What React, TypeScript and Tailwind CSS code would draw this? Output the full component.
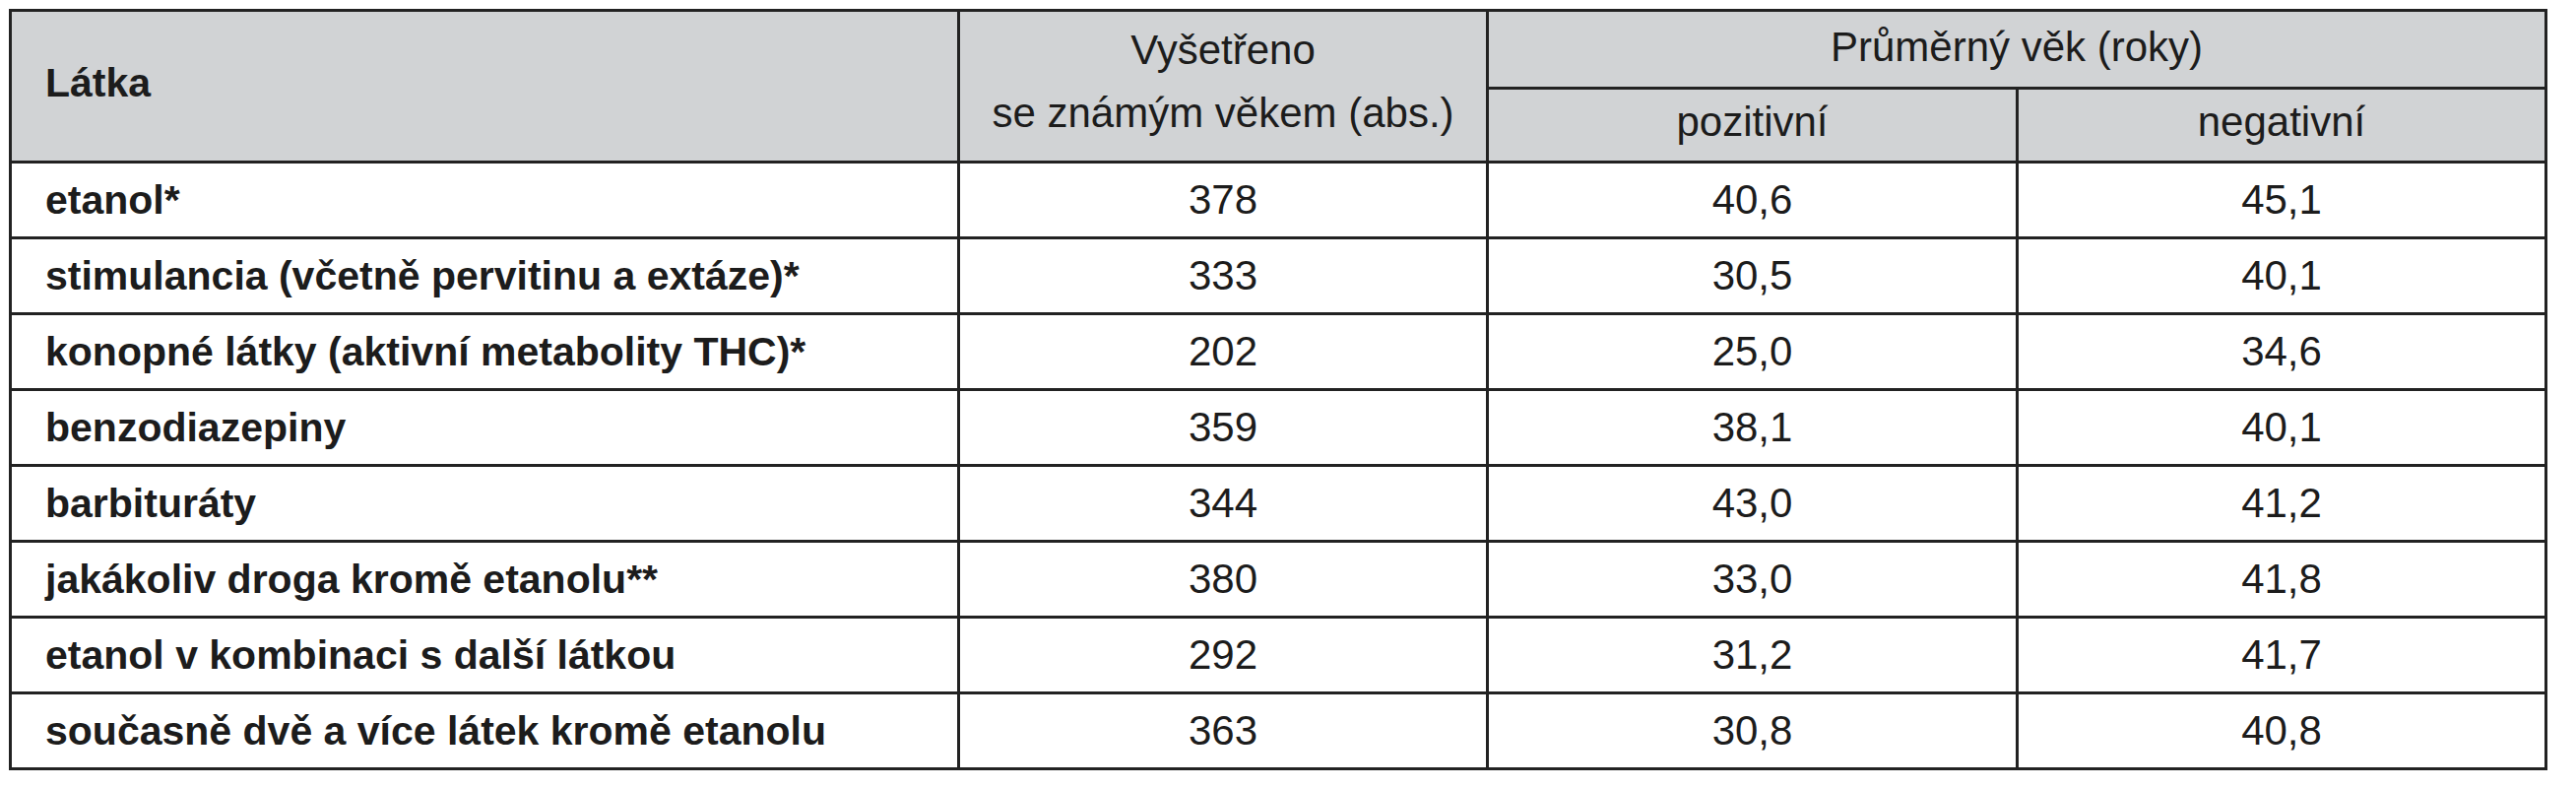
import React from 'react';

type Row = { name: string; total: string; pos: string; neg: string };

const rows: Row[] = [
  { name: 'etanol*', total: '378', pos: '40,6', neg: '45,1' },
  { name: 'stimulancia (včetně pervitinu a extáze)*', total: '333', pos: '30,5', neg: '40,1' },
  { name: 'konopné látky (aktivní metabolity THC)*', total: '202', pos: '25,0', neg: '34,6' },
  { name: 'benzodiazepiny', total: '359', pos: '38,1', neg: '40,1' },
  { name: 'barbituráty', total: '344', pos: '43,0', neg: '41,2' },
  { name: 'jakákoliv droga kromě etanolu**', total: '380', pos: '33,0', neg: '41,8' },
  { name: 'etanol v kombinaci s další látkou', total: '292', pos: '31,2', neg: '41,7' },
  { name: 'současně dvě a více látek kromě etanolu', total: '363', pos: '30,8', neg: '40,8' },
];

export default function App() {
  return (
    <div className="w-[2616px] h-[800px] bg-white pt-[9px] pl-[9px] text-[#1c1c1c] font-['Liberation_Sans',Arial,sans-serif]">
      <table className="table-fixed border-collapse w-[2575px] border-[3px] border-[#222]">
        <colgroup>
          <col className="w-[963px]" />
          <col className="w-[537px]" />
          <col className="w-[538px]" />
          <col className="w-[537px]" />
        </colgroup>
        <thead className="bg-[#d1d3d5]">
          <tr className="h-[79px]">
            <th
              rowSpan={2}
              className="border-[3px] border-[#222] text-left align-middle pl-[34px] pb-[6px] text-[41px] font-bold leading-none"
            >
              Látka
            </th>
            <th
              rowSpan={2}
              className="border-[3px] border-[#222] text-center align-middle pb-[10px] text-[42px] font-normal leading-[64px]"
            >
              Vyšetřeno
              <br />
              se známým věkem (abs.)
            </th>
            <th
              colSpan={2}
              className="border-[3px] border-[#222] text-center align-middle pb-[4px] text-[42px] font-normal leading-none"
            >
              Průměrný věk (roky)
            </th>
          </tr>
          <tr className="h-[75px]">
            <th className="border-[3px] border-[#222] text-center align-middle pb-[6px] text-[42px] font-normal leading-none">
              pozitivní
            </th>
            <th className="border-[3px] border-[#222] text-center align-middle pb-[6px] text-[42px] font-normal leading-none">
              negativní
            </th>
          </tr>
        </thead>
        <tbody>
          {rows.map((r) => (
            <tr key={r.name} className="h-[77px]">
              <td className="border-[3px] border-[#222] pl-[34px] text-[41px] font-bold leading-none whitespace-nowrap">
                {r.name}
              </td>
              <td className="border-[3px] border-[#222] text-center text-[42px] leading-none">{r.total}</td>
              <td className="border-[3px] border-[#222] text-center text-[42px] leading-none">{r.pos}</td>
              <td className="border-[3px] border-[#222] text-center text-[42px] leading-none">{r.neg}</td>
            </tr>
          ))}
        </tbody>
      </table>
    </div>
  );
}
